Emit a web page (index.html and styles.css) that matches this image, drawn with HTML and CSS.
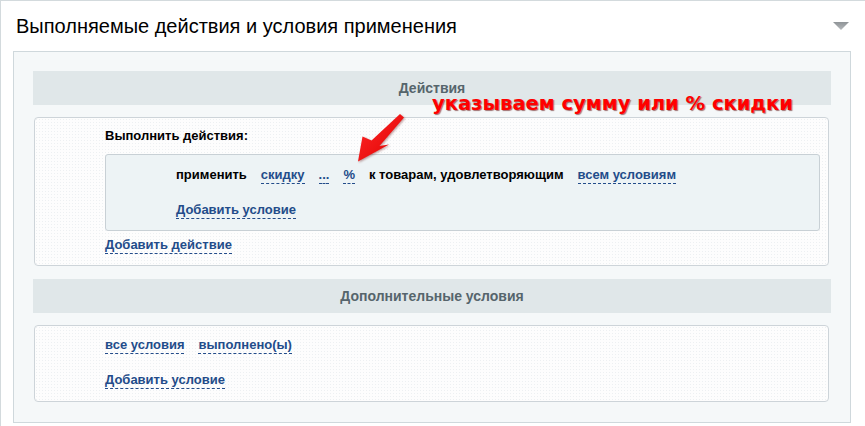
FILE: index.html
```html
<!DOCTYPE html>
<html lang="ru">
<head>
  <meta charset="UTF-8">
  <title>Выполняемые действия и условия применения</title>
  <link rel="stylesheet" href="styles.css">
</head>
<body>
  <div class="section">
    <div class="section-head">
      <h2>Выполняемые действия и условия применения</h2>
      <svg class="toggle" width="16" height="8" viewBox="0 0 16 8">
        <defs>
          <linearGradient id="tg" x1="0" y1="0" x2="0" y2="1">
            <stop offset="0" stop-color="#8f9497"/>
            <stop offset="1" stop-color="#b5b9bc"/>
          </linearGradient>
        </defs>
        <polygon points="0,0 16,0 8,8" fill="url(#tg)"/>
      </svg>
    </div>

    <div class="panel">
      <div class="bar">Действия</div>
      <div class="box">
        <div class="label">Выполнить действия:</div>
        <div class="inner">
          <div class="row">
            <span class="txt">применить</span>
            <a class="link">скидку</a>
            <a class="link">...</a>
            <a class="link">%</a>
            <span class="txt">к товарам, удовлетворяющим</span>
            <a class="link">всем условиям</a>
          </div>
          <div class="row row-add">
            <a class="link">Добавить условие</a>
          </div>
        </div>
        <div class="row row-action">
          <a class="link">Добавить действие</a>
        </div>
      </div>

      <div class="bar bar-extra">Дополнительные условия</div>
      <div class="box box-extra">
        <div class="row">
          <a class="link">все условия</a>
          <a class="link">выполнено(ы)</a>
        </div>
        <div class="row row-add">
          <a class="link">Добавить условие</a>
        </div>
      </div>
    </div>
  </div>

  <!-- annotation -->
  <div class="note">указываем сумму или % скидки</div>
  <svg class="arrow" width="60" height="60" viewBox="350 108 60 60">
    <defs>
      <linearGradient id="ag" x1="0" y1="0" x2="1" y2="1">
        <stop offset="0" stop-color="#ff2a2a"/>
        <stop offset="1" stop-color="#e00000"/>
      </linearGradient>
    </defs>
    <polygon points="400,114 404,117.5 379.5,146 389,144.5 358,161.5 362.5,136.5 371.5,140.5" fill="url(#ag)"/>
  </svg>
</body>
</html>
```

FILE: styles.css
```css
body {
  margin: 0;
  background: #fff;
  font-family: 'Liberation Sans', Arial, sans-serif;
  font-size: 13px;
  color: #000;
  position: relative;
}

.section {
  border-top: 1px solid #d3dadd;
  border-left: 1px solid #d3dadd;
  padding: 0 14px 3px 12px;
}

.section-head {
  display: flex;
  align-items: center;
  height: 50px;
  padding: 0 2px 0 3px;
}

.section-head h2 {
  margin: 0;
  font-size: 20px;
  font-weight: normal;
  line-height: 26px;
  color: #000;
}

.toggle {
  margin-left: auto;
  display: block;
}

.panel {
  border: 1px solid #cfd8dc;
  background: #f5f8f9;
  padding: 19px 19px 20px 19px;
}

.bar {
  height: 34px;
  line-height: 34px;
  background: #e0e7e9;
  color: #56656c;
  font-size: 14px;
  font-weight: bold;
  text-align: center;
}

.bar-extra {
  margin-top: 13px;
}

.box {
  margin: 12px 2px 0 1px;
  border: 1px solid #cdd4d9;
  border-radius: 4px;
  background-color: #fdfdfd;
  background-image: radial-gradient(circle, #edf0f2 0.7px, transparent 0.9px);
  background-size: 3px 3px;
  padding: 10px 8px 11px 70px;
}

.box-extra {
  padding-top: 11px;
  padding-bottom: 12px;
}

.label {
  font-weight: bold;
  line-height: 16px;
}

.inner {
  margin-top: 10px;
  border: 1px solid #c8d0d5;
  border-radius: 3px;
  background: #edf3f5;
  padding: 12px 8px 11px 70px;
}

.row {
  display: flex;
  align-items: baseline;
  gap: 14px;
  line-height: 16px;
  font-weight: bold;
}

.row-add {
  margin-top: 18px;
}

.row-action {
  margin-top: 6px;
}

.link {
  color: #234c8a;
  border-bottom: 1px dashed #234c8a;
  cursor: pointer;
}

.note {
  position: absolute;
  left: 432px;
  top: 92px;
  font-family: 'DejaVu Sans', Verdana, sans-serif;
  font-size: 19.5px;
  font-weight: bold;
  line-height: 24px;
  color: #ff0000;
  text-shadow: 1px 1px 1px rgba(90, 0, 0, 0.55);
  white-space: nowrap;
}

.arrow {
  position: absolute;
  left: 350px;
  top: 108px;
  filter: drop-shadow(1px 1px 1px rgba(90, 0, 0, 0.4));
}
```
